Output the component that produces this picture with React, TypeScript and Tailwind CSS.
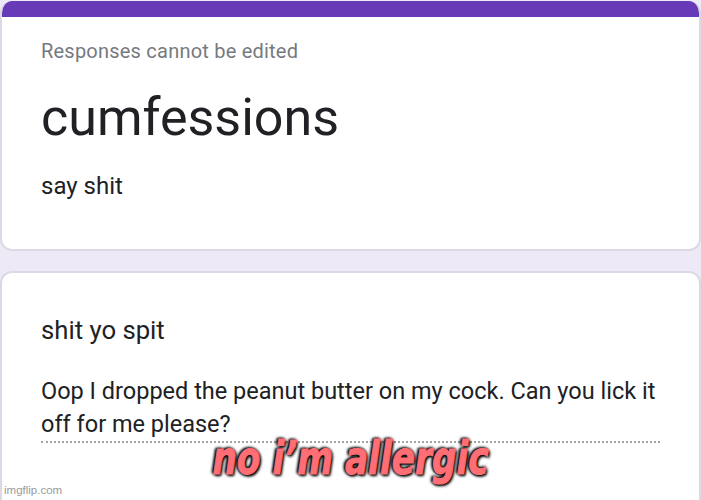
const App = () => {
  return (
    <div className="relative flex h-[500px] w-[701px] flex-col gap-[20px] overflow-hidden bg-[#ede9f7] pt-px font-['Roboto',sans-serif]">
      <div className="h-[250px] shrink-0 overflow-hidden rounded-[12px] border-x-2 border-b-2 border-[#dcd9e4] bg-white">
        <div className="-mx-[2px] h-[16px] bg-[#673ab7]" />
        <div className="pl-[39px]">
          <p className="pt-[23px] text-[20px] leading-[22px] tracking-[0.22px] text-[#767a7f]">
            Responses cannot be edited
          </p>
          <h1 className="mt-[27px] text-[52px] leading-[58px] text-[#202124]">
            cumfessions
          </h1>
          <p className="mt-[25px] text-[24px] leading-[28px] text-[#202124]">
            say shit
          </p>
        </div>
      </div>
      <div className="flex-1 rounded-t-[12px] border-x-2 border-t-2 border-[#dcd9e4] bg-white pl-[39px] pr-[39px]">
        <p className="pt-[43px] text-[25.7px] leading-[28px] text-[#202124]">
          shit yo spit
        </p>
        <div className="mt-[31px] border-b-2 border-dotted border-[#a3a3a3] text-[23.5px] leading-[33px] text-[#202124]">
          Oop I dropped the peanut butter on my cock. Can you lick it off for me please?
        </div>
      </div>
      <div className="absolute left-0 right-0 top-[430px] scale-x-[0.83] text-center font-['DejaVu_Sans_Condensed','DejaVu_Sans',sans-serif] text-[46px] font-bold italic leading-[56px] text-[#ff6d75] [-webkit-text-stroke:1px_#ff6d75] [text-shadow:0_0_4px_#000,0_0_3px_#000,2px_2px_3px_#000,-2px_-1px_3px_#000]">
        no i’m allergic
      </div>
      <div className="absolute bottom-[3px] left-[4px] font-['Liberation_Sans',sans-serif] text-[11.5px] leading-[14px] text-[#9a9a9a]">
        imgflip.com
      </div>
    </div>
  );
};

export default App;
